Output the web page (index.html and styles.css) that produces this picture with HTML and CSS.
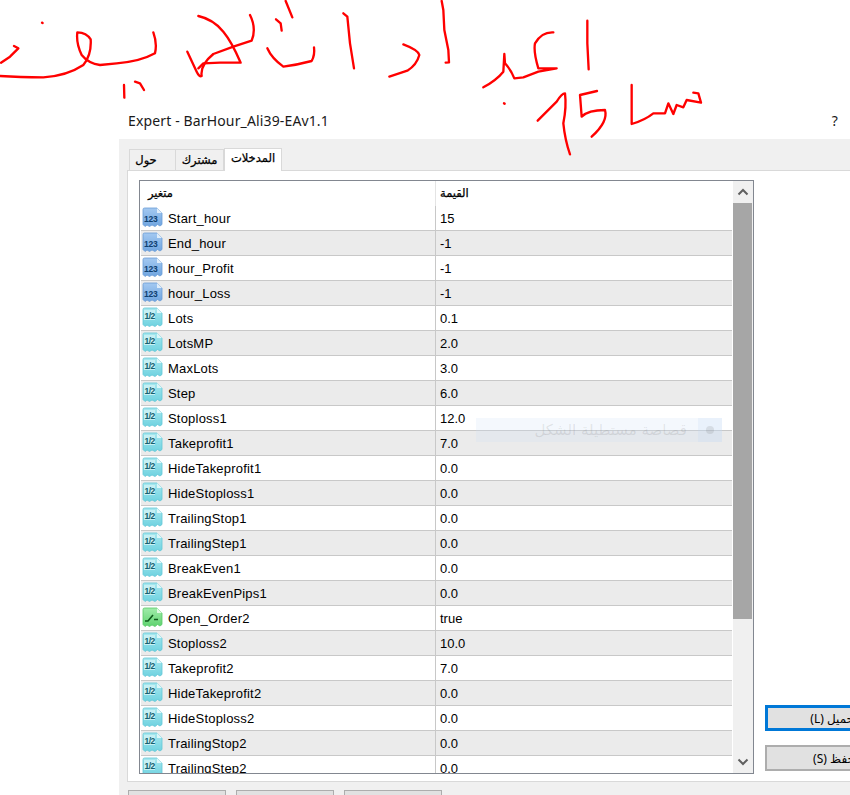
FILE: index.html
```html
<!DOCTYPE html>
<html lang="ar">
<head>
  <meta charset="UTF-8" />
  <meta name="viewport" content="width=device-width, initial-scale=1" />
  <title>Expert - BarHour_Ali39-EAv1.1</title>
  <link rel="stylesheet" href="styles.css">
</head>
<body>

  <svg width="0" height="0" class="defs">
    <defs>
      <linearGradient id="grad-int" x1="0" y1="0" x2="0" y2="1"><stop offset="0" stop-color="#a4c9f1"/><stop offset="1" stop-color="#6fa5e0"/></linearGradient>
      <linearGradient id="grad-dbl" x1="0" y1="0" x2="0" y2="1"><stop offset="0" stop-color="#a8e8ef"/><stop offset="1" stop-color="#6ed2e0"/></linearGradient>
      <linearGradient id="grad-bool" x1="0" y1="0" x2="0" y2="1"><stop offset="0" stop-color="#a0ecaa"/><stop offset="1" stop-color="#5fd26f"/></linearGradient>
    </defs>
  </svg>

  <svg class="symbols">
    <symbol id="icon-int" viewBox="0 0 21 21">
      <path d="M1 2.500Q1 1 2.500 1H15L20 6V17.500L18 19 15.500 17.500 13 19.500 10 18 7.500 19.500 5 18 3 19.500 1 17.500Z" fill="url(#grad-int)" stroke="#6a9cd6" stroke-width=".8"/>
      <path d="M15 1V6H20Z" fill="#e0edfa"/>
      <text x="2" y="15" class="icon-text icon-text-int">123</text>
    </symbol>
    <symbol id="icon-dbl" viewBox="0 0 21 21">
      <path d="M1 2.500Q1 1 2.500 1H15L20 6V17.500L18 19 15.500 17.500 13 19.500 10 18 7.500 19.500 5 18 3 19.500 1 17.500Z" fill="url(#grad-dbl)" stroke="#62c6d6" stroke-width=".8"/>
      <path d="M15 1V6H20Z" fill="#e0f7f9"/>
      <rect x="2" y="3" width="11" height="10" fill="#c6f0f4"/>
      <text x="2.500" y="11.800" class="icon-text icon-text-dbl">1/2</text>
    </symbol>
    <symbol id="icon-bool" viewBox="0 0 21 21">
      <path d="M1 2.500Q1 1 2.500 1H15L20 6V17.500L18 19 15.500 17.500 13 19.500 10 18 7.500 19.500 5 18 3 19.500 1 17.500Z" fill="url(#grad-bool)" stroke="#58ca68" stroke-width=".8"/>
      <path d="M15 1V6H20Z" fill="#e0fae3"/>
      <path d="M3 14H6L11 8M12 12.500H16" stroke="#0f5a1c" stroke-width="1.600" fill="none"/>
    </symbol>
  </svg>

  <header class="titlebar">
    <div class="title">Expert - BarHour_Ali39-EAv1.1</div>
    <div class="help">?</div>
  </header>

  <div class="dialog">
    <div class="tabs">
      <div class="tab">حول</div>
      <div class="tab">مشترك</div>
      <div class="tab active">المدخلات</div>
    </div>

    <div class="pane">
      <div class="list">
        <div class="table">
          <div class="row head">
            <div class="name">متغير</div>
            <div class="value">القيمة</div>
          </div>
          <div class="row"><div class="name"><svg class="icon"><use href="#icon-int"/></svg>Start_hour</div><div class="value">15</div></div>
          <div class="row"><div class="name"><svg class="icon"><use href="#icon-int"/></svg>End_hour</div><div class="value">-1</div></div>
          <div class="row"><div class="name"><svg class="icon"><use href="#icon-int"/></svg>hour_Profit</div><div class="value">-1</div></div>
          <div class="row"><div class="name"><svg class="icon"><use href="#icon-int"/></svg>hour_Loss</div><div class="value">-1</div></div>
          <div class="row"><div class="name"><svg class="icon"><use href="#icon-dbl"/></svg>Lots</div><div class="value">0.1</div></div>
          <div class="row"><div class="name"><svg class="icon"><use href="#icon-dbl"/></svg>LotsMP</div><div class="value">2.0</div></div>
          <div class="row"><div class="name"><svg class="icon"><use href="#icon-dbl"/></svg>MaxLots</div><div class="value">3.0</div></div>
          <div class="row"><div class="name"><svg class="icon"><use href="#icon-dbl"/></svg>Step</div><div class="value">6.0</div></div>
          <div class="row"><div class="name"><svg class="icon"><use href="#icon-dbl"/></svg>Stoploss1</div><div class="value">12.0</div></div>
          <div class="row"><div class="name"><svg class="icon"><use href="#icon-dbl"/></svg>Takeprofit1</div><div class="value">7.0</div></div>
          <div class="row"><div class="name"><svg class="icon"><use href="#icon-dbl"/></svg>HideTakeprofit1</div><div class="value">0.0</div></div>
          <div class="row"><div class="name"><svg class="icon"><use href="#icon-dbl"/></svg>HideStoploss1</div><div class="value">0.0</div></div>
          <div class="row"><div class="name"><svg class="icon"><use href="#icon-dbl"/></svg>TrailingStop1</div><div class="value">0.0</div></div>
          <div class="row"><div class="name"><svg class="icon"><use href="#icon-dbl"/></svg>TrailingStep1</div><div class="value">0.0</div></div>
          <div class="row"><div class="name"><svg class="icon"><use href="#icon-dbl"/></svg>BreakEven1</div><div class="value">0.0</div></div>
          <div class="row"><div class="name"><svg class="icon"><use href="#icon-dbl"/></svg>BreakEvenPips1</div><div class="value">0.0</div></div>
          <div class="row"><div class="name"><svg class="icon"><use href="#icon-bool"/></svg>Open_Order2</div><div class="value">true</div></div>
          <div class="row"><div class="name"><svg class="icon"><use href="#icon-dbl"/></svg>Stoploss2</div><div class="value">10.0</div></div>
          <div class="row"><div class="name"><svg class="icon"><use href="#icon-dbl"/></svg>Takeprofit2</div><div class="value">7.0</div></div>
          <div class="row"><div class="name"><svg class="icon"><use href="#icon-dbl"/></svg>HideTakeprofit2</div><div class="value">0.0</div></div>
          <div class="row"><div class="name"><svg class="icon"><use href="#icon-dbl"/></svg>HideStoploss2</div><div class="value">0.0</div></div>
          <div class="row"><div class="name"><svg class="icon"><use href="#icon-dbl"/></svg>TrailingStop2</div><div class="value">0.0</div></div>
          <div class="row"><div class="name"><svg class="icon"><use href="#icon-dbl"/></svg>TrailingStep2</div><div class="value">0.0</div></div>
        </div>

        <div class="scrollbar">
          <div class="arrow">
            <svg width="12" height="8" viewBox="0 0 12 8"><path d="M1.500 6.500L6 2 10.500 6.500" fill="none" stroke="#606060" stroke-width="2"/></svg>
          </div>
          <div class="track"><div class="thumb"></div></div>
          <div class="arrow">
            <svg width="12" height="8" viewBox="0 0 12 8"><path d="M1.500 1.500L6 6 10.500 1.500" fill="none" stroke="#606060" stroke-width="2"/></svg>
          </div>
        </div>
      </div>

      <div class="side">
        <button class="btn focus" dir="rtl">تحميل (L)</button>
        <button class="btn" dir="rtl">حفظ (S)</button>
      </div>
    </div>

    <div class="footer">
      <button class="btn footer-btn"></button>
      <button class="btn footer-btn"></button>
      <button class="btn footer-btn"></button>
    </div>
  </div>

  <!-- ghost of a snipping tool tooltip -->
  <div class="ghost">
    <span class="ghost-text">قصاصة مستطيلة الشكل</span>
    <span class="ghost-icon"><span class="ghost-dot"></span></span>
  </div>

  <!-- hand written red notes, coordinates are 3x page pixels -->
  <svg class="ink" viewBox="0 0 2550 480" fill="none">
    <g>
      <path d="M3 188L30 170Q45 155 55 145L42 138"/>
      <path d="M0 228Q60 232 130 232Q200 228 250 195Q275 165 272 118Q260 98 232 97Q228 130 245 165Q265 190 300 195L350 190Q420 185 465 160Q472 130 460 97"/>
      <path d="M126 68L128 69"/>
      <path d="M562 155L590 215Q598 232 605 228Q600 195 640 162L700 140 755 122Q770 85 750 45"/>
      <path d="M595 48Q640 58 670 95Q695 125 722 188L660 188 610 190 595 205"/>
      <path d="M857 3L877 52"/>
      <path d="M828 58L842 70 845 92"/>
      <path d="M802 145Q815 175 850 200Q890 195 935 183Q945 165 942 142"/>
      <path d="M1030 40L1042 50 1050 130 1062 205"/>
      <path d="M1210 133Q1255 150 1258 165Q1250 195 1222 212L1168 230"/>
      <path d="M372 255L373 293"/>
      <path d="M405 245L420 250 432 270"/>
    </g>
    <g transform="translate(1275 0)">
      <path d="M50 3L55 30 58 90 70 150 72 187 62 188"/>
      <path d="M385 97Q350 95 330 130Q325 155 340 205L395 205 340 215 295 232 268 235Q258 210 240 190L238 162 235 215Q215 240 175 262"/>
      <path d="M487 62L487 130 491 208"/>
      <path d="M237 310L239 311"/>
      <path d="M338 362L395 305Q410 280 420 280Q425 320 415 370Q420 420 435 463"/>
      <path d="M516 273L465 285 470 350Q490 330 540 330Q550 365 500 410"/>
      <path d="M620 255L620 372Q660 360 685 340L720 340 730 310 745 342 755 315 775 322 785 300 828 308 820 280 805 278"/>
    </g>
  </svg>

</body>
</html>
```

FILE: styles.css
```css
html, body {
  height: 795px;
  overflow: hidden;
}

body {
  margin: 0;
  position: relative;
  font-family: "Liberation Sans", Arial, sans-serif;
  font-size: 13px;
  background-color: #ffffff;
  color: #000000;
}

.defs {
  position: absolute;
}

.symbols {
  display: none;
}

.titlebar {
  height: 139px;
  box-sizing: border-box;
  padding: 0 12px 8px 128px;
  display: flex;
  justify-content: space-between;
  align-items: flex-end;
  font-family: "Noto Sans", sans-serif;
  font-size: 14px;
  line-height: 20px;
  letter-spacing: 0.14px;
  color: #1a1a1a;
}

.dialog {
  margin-left: 119px;
  height: 656px;
  box-sizing: border-box;
  padding-top: 8px;
  background-color: #f0f0f0;
}

.tabs {
  display: flex;
  align-items: flex-end;
  height: 23px;
  margin-left: 10px;
}

.tab {
  height: 21px;
  box-sizing: border-box;
  padding: 0;
  border: 1px solid #d9d9d9;
  border-bottom: none;
  border-left: none;
  font-family: "DejaVu Sans", sans-serif;
  font-size: 11.500px;
  -webkit-text-stroke: 0.25px #000000;
  line-height: 20px;
  text-align: center;
}

.tab:nth-child(1) {
  width: 47px;
  padding-right: 13px;
  border-left: 1px solid #d9d9d9;
}

.tab:nth-child(2) {
  width: 48px;
}

.tab.active {
  width: 58px;
  height: 23px;
  margin-bottom: -1px;
  position: relative;
  border-left: 1px solid #d9d9d9;
  line-height: 19px;
  background-color: #ffffff;
}

.pane {
  display: flex;
  height: 612px;
  box-sizing: border-box;
  margin-left: 8px;
  padding: 9px 0 0 11px;
  border: 1px solid #d9d9d9;
  border-right: none;
  background-color: #ffffff;
  overflow: hidden;
}

.list {
  flex: none;
  display: flex;
  width: 615px;
  height: 594px;
  box-sizing: border-box;
  padding-left: 1px;
  border: 1px solid #828790;
}

.table {
  flex: none;
  width: 591px;
  overflow: hidden;
}

.row {
  display: grid;
  grid-template-columns: 295px 295px;
  height: 25px;
  box-sizing: border-box;
  border-bottom: 1px solid #c8c8c8;
  line-height: 24px;
}

.row:nth-child(odd) {
  background-color: #ebebeb;
}

.row.head,
.row.head:nth-child(odd) {
  background-color: #ffffff;
  border-bottom: none;
  font-family: "DejaVu Sans", sans-serif;
  font-size: 11.500px;
  -webkit-text-stroke: 0.25px #000000;
}

.name {
  display: flex;
  align-items: flex-start;
  gap: 5px;
  box-sizing: border-box;
  padding: 1px 0 0 1px;
  border-right: 1px solid #c8c8c8;
  letter-spacing: 0.2px;
  white-space: nowrap;
}

.value {
  box-sizing: border-box;
  padding: 1px 0 0 4px;
}

.head .name {
  padding: 0 0 0 7px;
  border-color: #e4e4e4;
}

.head .value {
  padding: 0 0 0 4px;
}

.icon {
  flex: none;
  width: 21px;
  height: 21px;
}

.icon-text {
  font-family: "Liberation Sans", sans-serif;
  font-weight: bold;
}

.icon-text-int {
  font-size: 8.500px;
  letter-spacing: -0.2px;
  fill: #0f3f70;
}

.icon-text-dbl {
  font-size: 8.500px;
  letter-spacing: -0.5px;
  fill: #13606e;
}

.scrollbar {
  flex: none;
  width: 20px;
  margin-left: 1px;
  display: flex;
  flex-direction: column;
  background-color: #f0f0f0;
}

.arrow {
  flex: none;
  height: 22px;
  display: flex;
  align-items: center;
  justify-content: center;
}

.track {
  flex: 1;
}

.thumb {
  width: 19px;
  height: 416px;
  background-color: #a6a6a6;
}

.side {
  flex: none;
  margin-left: 11px;
  height: 594px;
  display: flex;
  flex-direction: column;
  justify-content: flex-end;
  gap: 14px;
  padding-bottom: 3px;
  box-sizing: border-box;
}

.btn {
  display: block;
  width: 138px;
  height: 26px;
  padding: 0;
  border: 2px solid #adadad;
  background-color: #e1e1e1;
  font-family: "Noto Sans", "DejaVu Sans", sans-serif;
  font-size: 12px;
  color: #000000;
}

.btn.focus {
  border: 3px solid #0078d7;
}

.footer {
  display: flex;
  gap: 10px;
  margin: 8px 0 0 9px;
}

.footer-btn {
  width: 98px;
  height: 30px;
  border-width: 1px;
}

.ghost {
  position: absolute;
  left: 476px;
  top: 418px;
  width: 246px;
  height: 24px;
  display: flex;
  justify-content: flex-end;
  background-color: rgba(205, 225, 248, 0.22);
  font-family: "DejaVu Sans", sans-serif;
  font-size: 15px;
  line-height: 24px;
  color: rgba(110, 110, 110, 0.16);
}

.ghost-text {
  margin-right: 11px;
}

.ghost-icon {
  width: 24px;
  height: 24px;
  display: flex;
  align-items: center;
  justify-content: center;
  background-color: rgba(190, 215, 245, 0.2);
}

.ghost-dot {
  width: 8px;
  height: 8px;
  border-radius: 50%;
  background-color: rgba(110, 110, 110, 0.16);
}

.ink {
  position: absolute;
  left: 0;
  top: 0;
  width: 850px;
  height: 160px;
  pointer-events: none;
}

.ink path {
  stroke: #ff0000;
  stroke-width: 7;
  stroke-linecap: round;
  stroke-linejoin: round;
}
```
